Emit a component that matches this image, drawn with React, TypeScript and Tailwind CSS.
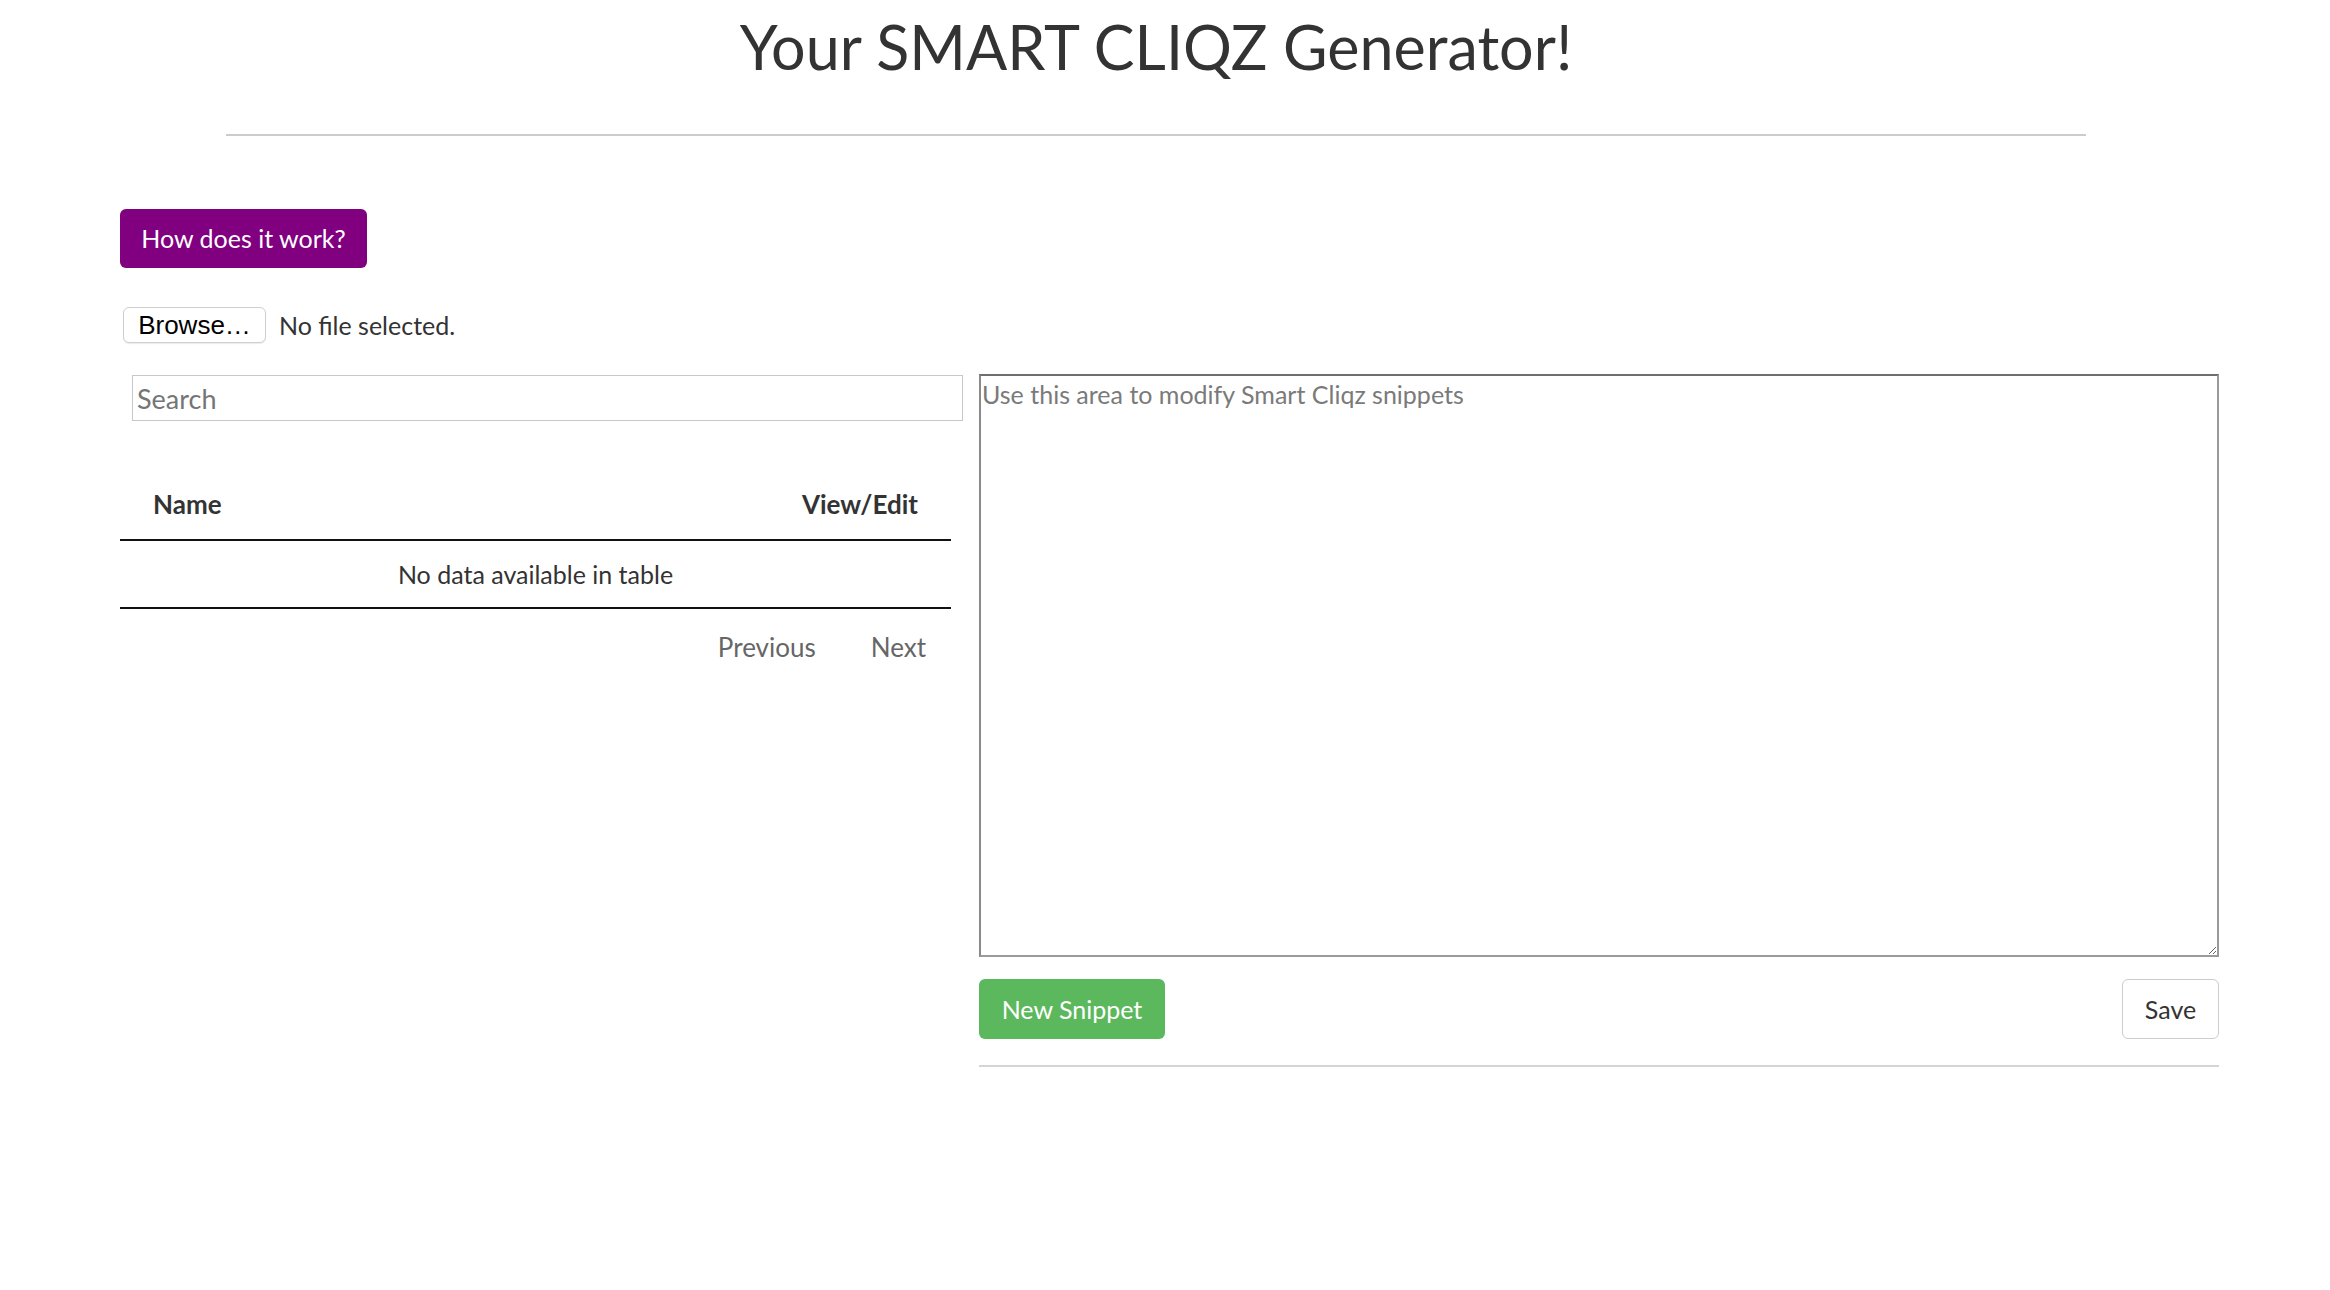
import React from "react";

const App = () => {
  return (
    <div className="w-[2312px] min-h-[1290px] bg-white text-[#333333] font-['Lato',sans-serif]">
      <header>
        <h1 className="pt-[11px] text-center text-[61px] leading-[72px] font-normal">
          Your SMART CLIQZ Generator!
        </h1>
        <hr className="mt-[51px] mx-[226px] border-0 border-t-2 border-[#cccccc]" />
      </header>

      <main className="pl-[120px]">
        <button className="mt-[73px] h-[59px] w-[247px] rounded-[6px] bg-[#800080] text-white text-[25px] leading-none">
          How does it work?
        </button>

        <div className="mt-[39px] flex items-center">
          <button className="ml-[3px] h-[36px] w-[143px] rounded-[6px] border-[1.5px] border-[#cfcfcf] bg-white text-black text-[26px] leading-none font-['Liberation_Sans',sans-serif] shadow-[0_1px_1px_rgba(0,0,0,0.08)]">
            Browse…
          </button>
          <span className="ml-[13px] text-[25px] leading-none">No file selected.</span>
        </div>

        <div className="mt-[31px] flex items-start">
          <section className="w-[843px]">
            <input
              type="text"
              placeholder="Search"
              className="mt-[1px] ml-[12px] h-[46px] w-[831px] border-[1.5px] border-[#c8c8c8] pl-[4px] text-[27px] outline-none placeholder:text-[#757575]"
            />
            <div className="mt-[49px] w-[831px]">
              <div className="flex h-[71px] items-center justify-between border-b-2 border-[#111111] px-[33px] text-[26px] font-bold">
                <span>Name</span>
                <span>View/Edit</span>
              </div>
              <div className="flex h-[68px] items-center justify-center border-b-2 border-[#111111] pt-[2px] text-[25px]">
                No data available in table
              </div>
              <div className="flex h-[74px] items-center justify-end gap-[55px] pr-[25px] pt-[2px] text-[26px] text-[#666666]">
                <span>Previous</span>
                <span>Next</span>
              </div>
            </div>
          </section>

          <section className="ml-[16px] w-[1240px]">
            <textarea
              placeholder="Use this area to modify Smart Cliqz snippets"
              className="block h-[583px] w-full border-2 border-t-[#6e6e6e] border-l-[#8a8a8a] border-r-[#9a9a9a] border-b-[#9a9a9a] px-[1px] pt-[4px] text-[25px] leading-[29px] outline-none placeholder:text-[#7a7a7a]"
            />
            <div className="mt-[22px] flex justify-between">
              <button className="h-[60px] w-[186px] rounded-[6px] bg-[#5cb85c] text-white text-[25px] leading-none">
                New Snippet
              </button>
              <button className="h-[60px] w-[97px] rounded-[6px] border-[1.5px] border-[#cccccc] bg-white text-[25px] leading-none text-[#333333]">
                Save
              </button>
            </div>
            <hr className="mt-[26px] border-0 border-t-2 border-[#d5d5d5]" />
          </section>
        </div>
      </main>
    </div>
  );
};

export default App;
